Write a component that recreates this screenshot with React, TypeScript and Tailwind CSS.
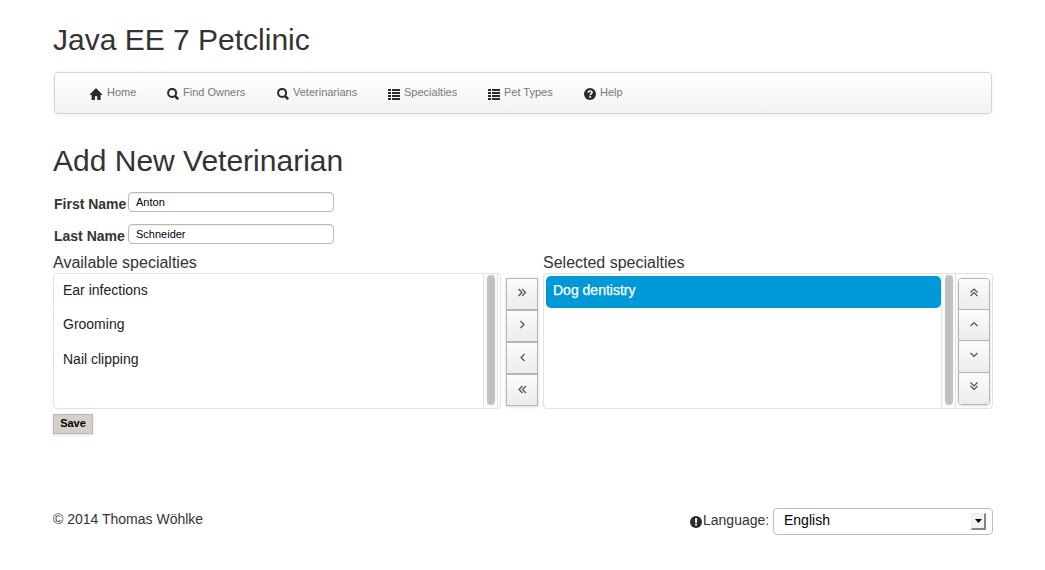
import React from 'react';

function HomeIcon() {
  return (
    <svg className="block h-3 w-3" viewBox="0 0 12 12" fill="#2b2b2b">
      <path d="M6 0 12 6.2V7H10.6V12H7.3V8.3H4.9V12H1.6V7H0V6.2Z" />
    </svg>
  );
}

function SearchIcon() {
  return (
    <svg className="block h-3 w-3" viewBox="0 0 12 12" fill="none" stroke="#2b2b2b">
      <circle cx="5.1" cy="4.9" r="4" strokeWidth="2" />
      <path d="M8 8 11.2 11.2" strokeWidth="2.5" />
    </svg>
  );
}

function ListIcon() {
  return (
    <svg className="block h-3 w-3" viewBox="0 0 12 12" fill="#2b2b2b" shapeRendering="crispEdges">
      <path d="M0 1h3v2H0zM4 1h8v2H4zM0 4h3v2H0zM4 4h8v2H4zM0 7h3v2H0zM4 7h8v2H4zM0 10h3v2H0zM4 10h8v2H4z" />
    </svg>
  );
}

function HelpIcon() {
  return (
    <svg className="block h-3 w-3" viewBox="0 0 12 12">
      <circle cx="6" cy="6" r="6" fill="#2b2b2b" />
      <path d="M4.2 4.8C4.2 2.4 8 2.4 8 4.4 8 5.7 6.2 5.7 6.2 7.2" fill="none" stroke="#fff" strokeWidth="1.5" />
      <path d="M5.3 8.1h1.8v1.6H5.3z" fill="#fff" />
    </svg>
  );
}

function AlertIcon() {
  return (
    <svg className="block h-3 w-3" viewBox="0 0 12 12">
      <circle cx="6" cy="6" r="6" fill="#2b2b2b" />
      <path d="M5 2.3h2.2L6.9 7H5.3zM5.1 7.8h1.9v1.7H5.1z" fill="#fff" />
    </svg>
  );
}

const navItems = [
  { label: 'Home', icon: <HomeIcon />, width: 'w-[77px]', gap: 'gap-[5px]' },
  { label: 'Find Owners', icon: <SearchIcon />, width: 'w-[110px]', gap: 'gap-1' },
  { label: 'Veterinarians', icon: <SearchIcon />, width: 'w-[111px]', gap: 'gap-1' },
  { label: 'Specialties', icon: <ListIcon />, width: 'w-[100px]', gap: 'gap-1' },
  { label: 'Pet Types', icon: <ListIcon />, width: 'w-[96px]', gap: 'gap-1' },
  { label: 'Help', icon: <HelpIcon />, width: 'w-[60px]', gap: 'gap-1' },
];

const arrows = {
  addAll: 'M3.5 3 7 6.5 3.5 10M7 3 10.5 6.5 7 10',
  add: 'M5.5 3 9 6.5 5.5 10',
  remove: 'M9.5 4 6 7.5 9.5 11',
  removeAll: 'M7.5 4 4 7.5 7.5 11M11 4 7.5 7.5 11 11',
  top: 'M3.5 6.5 7 3 10.5 6.5M3.5 10 7 6.5 10.5 10',
  up: 'M3.5 9 7 5.5 10.5 9',
  down: 'M3.5 5 7 8.5 10.5 5',
  bottom: 'M3.5 2.5 7 6 10.5 2.5M3.5 6 7 9.5 10.5 6',
};

function Arrow({ d }: { d: string }) {
  return (
    <svg className="block h-[14px] w-[15px]" viewBox="0 0 15 14" fill="none" stroke="#4f5155" strokeWidth="1.2">
      <path d={d} />
    </svg>
  );
}

function TransferButton({ d }: { d: string }) {
  return (
    <button className="flex h-8 w-8 items-start justify-center border border-[#b3b3b3] bg-linear-to-b from-[#fcfcfc] to-[#ececec] pt-[7px]">
      <Arrow d={d} />
    </button>
  );
}

function Scrollbar() {
  return (
    <div className="flex w-[15px] justify-center border-x border-[#e4e4e4] bg-[#fafafa] pt-px">
      <div className="h-[130px] w-2 rounded-full bg-[#c1c1c1]" />
    </div>
  );
}

function Field({ label, value }: { label: string; value: string }) {
  return (
    <div className="flex h-8 items-start">
      <label className="w-[75px] shrink-0 pl-px pt-[2px] text-sm leading-5 font-bold whitespace-nowrap">{label}</label>
      <input
        className="h-5 w-[206px] rounded-[4px] border border-[#bdb7b0] bg-white px-[7px] text-[11px] text-black shadow-[inset_0_1px_1px_rgba(0,0,0,0.07)] outline-none"
        defaultValue={value}
      />
    </div>
  );
}

export default function App() {
  return (
    <div className="h-[570px] w-[1045px] overflow-hidden bg-white pt-5 pl-[53px] font-['Liberation_Sans',Arial,sans-serif] text-sm text-[#333]">
      <div className="w-[940px]">
        <h1 className="h-[52px] text-[30px] leading-10 whitespace-nowrap">Java EE 7 Petclinic</h1>
        <nav className="mx-px flex h-[42px] rounded-[4px] border border-[#d4d4d4] bg-linear-to-b from-white to-[#f2f2f2] pt-[9px] pl-[35px] text-[11px] leading-5 text-[#777] shadow-[0_1px_4px_rgba(0,0,0,0.065)]">
          {navItems.map((item) => (
            <a key={item.label} className={`flex items-start whitespace-nowrap ${item.width} ${item.gap}`}>
              <span className="mt-[6px] shrink-0">{item.icon}</span>
              {item.label}
            </a>
          ))}
        </nav>
        <h2 className="mt-[27px] h-[51px] text-[30px] leading-10 whitespace-nowrap">Add New Veterinarian</h2>
        <Field label="First Name" value="Anton" />
        <Field label="Last Name" value="Schneider" />
        <div className="mt-[-3px] flex h-[156px]">
          <section className="w-[448px]">
            <h3 className="h-5 text-base leading-5">Available specialties</h3>
            <div className="flex h-[136px] rounded-[4px] border border-[#e2e2e2] pr-[2px]">
              <ul className="flex-1 pt-[6px] pl-[9px] leading-5 text-[#222]">
                <li className="h-[34px]">Ear infections</li>
                <li className="h-[35px]">Grooming</li>
                <li>Nail clipping</li>
              </ul>
              <Scrollbar />
            </div>
          </section>
          <div className="mt-[25px] ml-[5px] h-[128px] w-8 shadow-[0_1px_3px_rgba(0,0,0,0.15)]">
            <TransferButton d={arrows.addAll} />
            <TransferButton d={arrows.add} />
            <TransferButton d={arrows.remove} />
            <TransferButton d={arrows.removeAll} />
          </div>
          <section className="ml-[5px] w-[450px]">
            <h3 className="h-5 text-base leading-5">Selected specialties</h3>
            <div className="flex h-[136px] rounded-[4px] border border-[#e2e2e2] pr-[2px]">
              <ul className="flex-1 pt-[2px] pl-[2px]">
                <li className="h-8 rounded-[5px] bg-[#0099d8] pt-1 pl-[7px] leading-5 text-white [-webkit-text-stroke:0.25px_white]">
                  Dog dentistry
                </li>
              </ul>
              <Scrollbar />
              <div className="mt-1 ml-[2px] grid h-[127px] w-8 grid-rows-[31px_31px_32px_31px] overflow-hidden rounded-[4px] border border-[#b3b3b3] shadow-[0_1px_3px_rgba(0,0,0,0.15)]">
                {[arrows.top, arrows.up, arrows.down, arrows.bottom].map((d) => (
                  <button
                    key={d}
                    className="flex items-start justify-center border-b border-[#b3b3b3] bg-linear-to-b from-[#fcfcfc] to-[#ececec] pt-[7px] last:border-b-0"
                  >
                    <Arrow d={d} />
                  </button>
                ))}
              </div>
            </div>
          </section>
        </div>
        <button className="mt-[5px] flex h-5 w-10 items-start justify-center border border-[#c1bab1] bg-[#d4d0c8] text-[11px] leading-[17px] font-bold text-black shadow-[0_1px_3px_rgba(0,0,0,0.15)]">
          Save
        </button>
        <footer className="mt-[74px] flex h-[27px] items-start">
          <span className="pt-px leading-5">© 2014 Thomas Wöhlke</span>
          <div className="ml-auto flex items-start">
            <span className="mt-[8px]">
              <AlertIcon />
            </span>
            <span className="w-[71px] pt-[2px] pl-px leading-5">Language:</span>
            <div className="flex h-[27px] w-[220px] items-start justify-between rounded-[4px] border border-[#c2bbb4] bg-white pt-px pr-[6px] pl-[10px] leading-5 text-black">
              English
              <span className="mt-[3px] flex h-[17px] w-[15px] items-center justify-center border-t border-r-2 border-b-2 border-l border-t-[#eee] border-r-[#858585] border-b-[#858585] border-l-[#eee] bg-[#f4f4f4]">
                <svg className="block h-1 w-[7px]" viewBox="0 0 7 4">
                  <path d="M0 0h7L3.5 4z" fill="#000" />
                </svg>
              </span>
            </div>
          </div>
        </footer>
      </div>
    </div>
  );
}
